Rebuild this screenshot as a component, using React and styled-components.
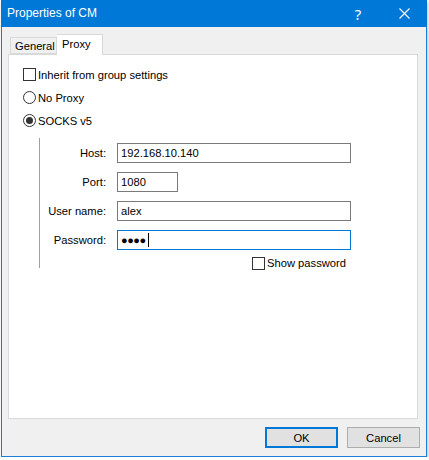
import styled, { createGlobalStyle } from "styled-components";

const Global = createGlobalStyle`
  html, body {
    margin: 0;
    padding: 0;
    background: #ffffff;
  }
  body {
    font-family: "Liberation Sans", Arial, sans-serif;
    font-size: 11.2px;
    color: #000;
  }
`;

const Window = styled.div`
  margin-left: 1px;
  width: 426px;
  height: 457px;
  box-sizing: border-box;
  border: 1px solid #1a7fd4;
  border-top: none;
  background: #f0f0f0;
  display: flex;
  flex-direction: column;
  box-shadow: 1px 2px 3px rgba(0, 0, 0, 0.25);
`;

const TitleBar = styled.div`
  height: 27px;
  margin: 0 -1px;
  background: #0078d7;
  color: #fff;
  display: flex;
  align-items: center;
  font-family: "Liberation Sans", Arial, sans-serif;
  font-size: 12px;
`;

const Title = styled.div`
  flex: 1;
  padding-left: 6px;
  padding-bottom: 1px;
`;

const TitleButton = styled.div`
  width: 46px;
  height: 27px;
  display: flex;
  align-items: center;
  justify-content: center;
  font-size: 15px;
  font-family: "Noto Sans", sans-serif;
`;

const Body = styled.div`
  flex: 1;
  display: flex;
  flex-direction: column;
  padding: 7px 8px 8px 6px;
`;

const TabStrip = styled.div`
  display: flex;
  align-items: flex-end;
  height: 20px;
  padding-left: 2px;
  position: relative;
  z-index: 1;
`;

const Tab = styled.div`
  box-sizing: border-box;
  height: ${(p) => (p.$active ? "21px" : "17px")};
  width: ${(p) => p.$w}px;
  margin-bottom: ${(p) => (p.$active ? "-1px" : "0")};
  border: 1px solid #d9d9d9;
  border-bottom: ${(p) => (p.$active ? "none" : "1px solid #d9d9d9")};
  border-left: ${(p) => (p.$first ? "1px solid #d9d9d9" : "none")};
  background: ${(p) => (p.$active ? "#ffffff" : "#f0f0f0")};
  display: flex;
  align-items: center;
  padding-left: ${(p) => (p.$active ? "5px" : "4px")};
  padding-bottom: ${(p) => (p.$active ? "2px" : "0")};
`;

const Panel = styled.div`
  flex: 1;
  background: #fff;
  border: 1px solid #d9d9d9;
  padding: 8px 14px 0 14px;
  display: flex;
  flex-direction: column;
`;

const OptionRow = styled.label`
  height: 23px;
  display: flex;
  align-items: center;
  gap: 2px;
`;

const Box = styled.span`
  width: 13px;
  height: 13px;
  box-sizing: border-box;
  border: 1px solid #333;
  background: #fff;
  flex-shrink: 0;
`;

const Radio = styled.span`
  width: 13px;
  height: 13px;
  box-sizing: border-box;
  border: 1px solid #333;
  border-radius: 50%;
  background: #fff;
  display: flex;
  align-items: center;
  justify-content: center;
  flex-shrink: 0;
  &::after {
    content: "";
    display: ${(p) => (p.$checked ? "block" : "none")};
    width: 7px;
    height: 7px;
    border-radius: 50%;
    background: #333;
  }
`;

const Group = styled.div`
  margin: 6px 0 0 16px;
  height: 130px;
  box-sizing: border-box;
  border-left: 1px solid #a0a0a0;
  padding-top: 5px;
`;

const Form = styled.div`
  display: grid;
  grid-template-columns: 66px 234px;
  column-gap: 11px;
  row-gap: 9px;
  align-items: center;
`;

const Label = styled.div`
  text-align: right;
`;

const Field = styled.div`
  box-sizing: border-box;
  height: 20px;
  width: ${(p) => p.$w || 234}px;
  border: 1px solid ${(p) => (p.$focus ? "#0078d7" : "#7a7a7a")};
  background: #fff;
  display: flex;
  align-items: center;
  padding-left: 3px;
`;

const Dots = styled.span`
  font-size: 11px;
  letter-spacing: -0.5px;
  font-weight: bold;
`;

const Caret = styled.span`
  display: inline-block;
  width: 1px;
  height: 14px;
  background: #000;
  margin-left: 2px;
`;

const ShowRow = styled(OptionRow)`
  grid-column: 2;
  height: 14px;
  margin-top: -3px;
  padding-left: 135px;
`;

const Footer = styled.div`
  display: flex;
  justify-content: flex-end;
  gap: 9px;
  padding-top: 8px;
  margin-right: -2px;
`;

const Button = styled.div`
  box-sizing: border-box;
  width: 73px;
  height: 21px;
  background: #e1e1e1;
  border: ${(p) => (p.$default ? "2px solid #0078d7" : "1px solid #adadad")};
  display: flex;
  align-items: center;
  justify-content: center;
`;

const CloseIcon = () => (
  <svg width="11" height="11" viewBox="0 0 11 11">
    <path d="M0.5 0.5 L10.5 10.5 M10.5 0.5 L0.5 10.5" stroke="#fff" strokeWidth="1.1" />
  </svg>
);

export default function App() {
  return (
    <>
      <Global />
      <Window>
        <TitleBar>
          <Title>Properties of CM</Title>
          <TitleButton>?</TitleButton>
          <TitleButton>
            <CloseIcon />
          </TitleButton>
        </TitleBar>
        <Body>
          <TabStrip>
            <Tab $first $w={47}>General</Tab>
            <Tab $active $w={46}>Proxy</Tab>
          </TabStrip>
          <Panel>
            <OptionRow>
              <Box />
              Inherit from group settings
            </OptionRow>
            <OptionRow>
              <Radio />
              No Proxy
            </OptionRow>
            <OptionRow>
              <Radio $checked />
              SOCKS v5
            </OptionRow>
            <Group>
              <Form>
                <Label>Host:</Label>
                <Field>192.168.10.140</Field>
                <Label>Port:</Label>
                <Field $w={61}>1080</Field>
                <Label>User name:</Label>
                <Field>alex</Field>
                <Label>Password:</Label>
                <Field $focus>
                  <Dots>●●●●</Dots>
                  <Caret />
                </Field>
                <ShowRow>
                  <Box />
                  Show password
                </ShowRow>
              </Form>
            </Group>
          </Panel>
          <Footer>
            <Button $default>OK</Button>
            <Button>Cancel</Button>
          </Footer>
        </Body>
      </Window>
    </>
  );
}
